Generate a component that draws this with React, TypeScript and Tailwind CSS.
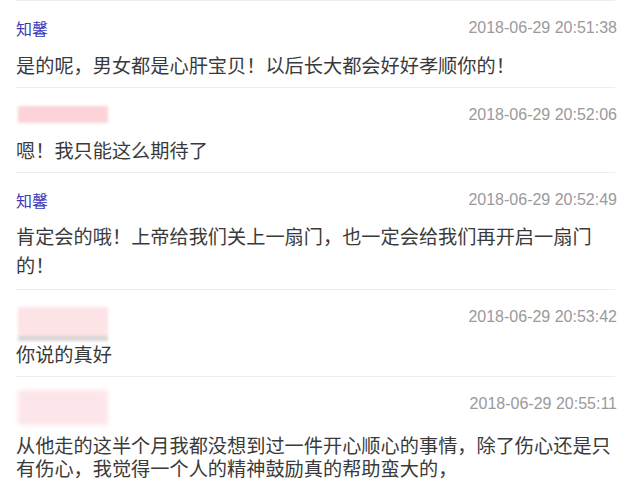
import type { ReactNode } from 'react'

type Comment = {
  name?: string
  blur?: ReactNode
  time: string
  text: string
  textClass: string
}

const comments: Comment[] = [
  {
    name: '知馨',
    time: '2018-06-29 20:51:38',
    text: '是的呢，男女都是心肝宝贝！以后长大都会好好孝顺你的！',
    textClass: 'mt-[14px] leading-[26px]',
  },
  {
    blur: <div className="mt-[1px] ml-[2px] h-[17px] w-[90px] bg-[#fbd3d8] blur-[1.5px]" />,
    time: '2018-06-29 20:52:06',
    text: '嗯！我只能这么期待了',
    textClass: 'mt-[12px] leading-[26px]',
  },
  {
    name: '知馨',
    time: '2018-06-29 20:52:49',
    text: '肯定会的哦！上帝给我们关上一扇门，也一定会给我们再开启一扇门的！',
    textClass: 'mt-[12px] leading-[29px]',
  },
  {
    blur: (
      <div className="ml-[2px] flex h-[34px] w-[90px] flex-col blur-[1.5px]">
        <div className="flex-1 bg-[#fde3e6]" />
        <div className="h-[5px] bg-[#d9d6d6]" />
      </div>
    ),
    time: '2018-06-29 20:53:42',
    text: '你说的真好',
    textClass: 'mt-[14px] leading-[26px]',
  },
  {
    blur: <div className="-mt-[4px] ml-[2px] h-[35px] w-[90px] bg-[#fde6e9] blur-[2px]" />,
    time: '2018-06-29 20:55:11',
    text: '从他走的这半个月我都没想到过一件开心顺心的事情，除了伤心还是只有伤心，我觉得一个人的精神鼓励真的帮助蛮大的，',
    textClass: 'mt-[20px] leading-[23px]',
  },
]

// full-width punctuation: whole em cell, centred, glued to the char before it
function renderText(text: string) {
  const parts: ReactNode[] = []
  let buf = ''
  Array.from(text).forEach((ch, i) => {
    if (ch === '，' || ch === '！') {
      const prev = buf.slice(-1)
      buf = buf.slice(0, -1)
      if (buf) parts.push(buf)
      buf = ''
      parts.push(
        <span key={i} className="whitespace-nowrap">
          {prev}
          <span className="inline-block w-[1em] text-center">{ch}</span>
        </span>,
      )
    } else {
      buf += ch
    }
  })
  if (buf) parts.push(buf)
  return parts
}

function CommentItem({ c }: { c: Comment }) {
  return (
    <div className="border-t border-[#ececec] pt-[17px] pb-[9px]">
      <div className="flex h-5 items-start justify-between">
        {c.name ? (
          <span className="text-[16px] leading-5 text-[#3e3ab5]">{c.name}</span>
        ) : (
          c.blur
        )}
        <span className="-mr-[2px] text-[16px] leading-5 text-[#9a9a9a] [font-family:'Liberation_Sans',Arial,sans-serif]">
          {c.time}
        </span>
      </div>
      <p className={`text-[19.2px] text-[#3a3a3a] ${c.textClass}`}>{renderText(c.text)}</p>
    </div>
  )
}

export default function App() {
  return (
    <div className="h-[499px] w-[640px] overflow-hidden bg-white [font-family:'Noto_Sans_CJK_SC','Noto_Sans',sans-serif]">
      <div className="ml-4 w-[599px]">
        {comments.map((c, i) => (
          <CommentItem key={i} c={c} />
        ))}
      </div>
    </div>
  )
}
